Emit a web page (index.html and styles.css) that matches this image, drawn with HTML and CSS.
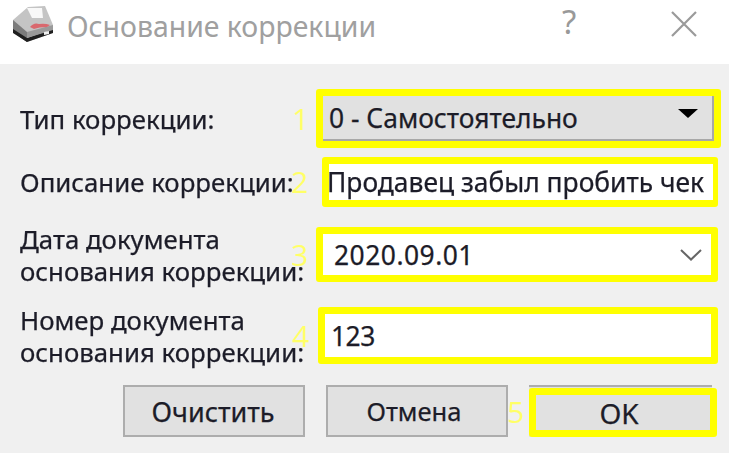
FILE: index.html
```html
<!DOCTYPE html>
<html lang="ru">
  <head>
    <meta charset="utf-8">
    <title>Основание коррекции</title>
    <link rel="stylesheet" href="styles.css">
  </head>
  <body>
    <div class="titlebar">
      <svg class="app-icon" width="44" height="44" viewBox="0 0 44 44">
        <path d="M17 3 L34 2 L42 21 L42 29 L16 38 L2 28 L2 16 Z" fill="#c4c4c4"/>
        <path d="M2 16 L16 28 L16 38 L2 28 Z" fill="#7c7c7c"/>
        <path d="M2 25 L16 34 L42 25 L42 29 L16 38 L2 29 Z" fill="#1f1f1f"/>
        <path d="M16 28 L42 21 L42 26 L16 34 Z" fill="#9a9a9a"/>
        <path d="M16 4 L31 4 L32 14 L21 14 Z" fill="#f8f8f8"/>
        <path d="M19 23 Q23 18 28 20 Q34 19 39 21 L36 23 Q28 23 23 25 Z" fill="#d9686e"/>
        <path d="M33 28 L38 27 L38 30 L33 31 Z" fill="#eee"/>
      </svg>
      <span class="window-title">Основание коррекции</span>
      <span class="help">?</span>
      <svg class="close" width="26" height="26" viewBox="0 0 26 26">
        <path d="M1 1 L25 25 M25 1 L1 25" stroke="#9a9a9a" stroke-width="2.2" fill="none"/>
      </svg>
    </div>

    <div class="dialog">
      <div class="row row-type">
        <div class="label">Тип коррекции:</div>
        <div class="field field-type">
          <span class="mark">1</span>
          <div class="combo">
            <span>0 - Самостоятельно</span>
            <span class="arrow"></span>
          </div>
        </div>
      </div>

      <div class="row row-desc">
        <div class="label">Описание коррекции:</div>
        <div class="field field-desc">
          <span class="mark">2</span>
          <div class="input">Продавец забыл пробить чек</div>
        </div>
      </div>

      <div class="row row-date">
        <div class="label">Дата документа<br>основания коррекции:</div>
        <div class="field field-date">
          <span class="mark">3</span>
          <div class="input">
            <span>2020.09.01</span>
            <svg class="chevron" width="22" height="12" viewBox="0 0 22 12">
              <path d="M1 1 L11 10.5 L21 1" stroke="#666" stroke-width="2" fill="none"/>
            </svg>
          </div>
        </div>
      </div>

      <div class="row row-num">
        <div class="label">Номер документа<br>основания коррекции:</div>
        <div class="field field-num">
          <span class="mark">4</span>
          <div class="input">123</div>
        </div>
      </div>

      <div class="buttons">
        <div class="btn btn-clear">Очистить</div>
        <div class="btn btn-cancel">Отмена</div>
        <div class="btn btn-ok">
          <span class="mark">5</span>
          <div class="ok-inner">OK</div>
        </div>
      </div>
    </div>
  </body>
</html>
```

FILE: styles.css
```css
*{
    margin: 0;
    padding: 0;
    box-sizing: border-box;
}
html,body{
    height: 100%;
    overflow: hidden;
}
body{
    background: #f0f0f0;
    color: #1c1c28;
    font-family: "Noto Sans", sans-serif;
    font-size: 26.4px;
    -webkit-text-stroke: 0.25px #1c1c28;
    display: flex;
    flex-direction: column;
    filter: blur(0.7px);
}
.titlebar{
    height: 64px;
    background: #fff;
    display: flex;
    align-items: center;
    position: relative;
    padding-left: 11px;
}
.app-icon{
    flex: none;
    margin-top: -12px;
}
.window-title{
    margin-left: 12px;
    font-size: 28.4px;
    color: #a0a0a0;
    -webkit-text-stroke: 0;
    margin-top: -12px;
}
.help{
    position: absolute;
    left: 562px;
    top: -1px;
    font-size: 33px;
    color: #999;
    -webkit-text-stroke: 0;
}
.close{
    position: absolute;
    left: 671px;
    top: 11px;
}
.dialog{
    flex: 1;
    padding-top: 25px;
}
.row{
    display: flex;
    align-items: center;
    padding-left: 20px;
    position: relative;
}
.label{
    font-size: 25.8px;
    line-height: 32px;
    white-space: nowrap;
}
.field{
    position: absolute;
    top: 0;
    bottom: 0;
    border: 7px solid #ff0;
    border-radius: 3px;
    display: flex;
}
.mark{
    position: absolute;
    top: 50%;
    transform: translateY(-50%);
    right: 100%;
    font-family: "Open Sans", sans-serif;
    font-size: 30px;
    line-height: 1;
    color: #ffff66;
    -webkit-text-stroke: 0;
}
.row-type{
    height: 59px;
}
.row-desc{
    height: 50px;
    margin-top: 9px;
}
.row-date{
    height: 55px;
    margin-top: 20px;
}
.row-num{
    height: 57px;
    margin-top: 25px;
}
.field-type{
    left: 316px;
    width: 405px;
}
.field-desc{
    left: 322px;
    width: 396px;
}
.field-date{
    left: 316px;
    width: 402px;
}
.field-num{
    left: 318px;
    width: 400px;
}
.field-type .mark{
    margin-right: 14px;
}
.field-desc .mark{
    margin-right: 21px;
}
.field-date .mark{
    margin-right: 15px;
}
.field-num .mark{
    margin-right: 16px;
}
.combo{
    flex: 1;
    background: #e1e1e1;
    border-right: 2px solid #a8a8a8;
    border-bottom: 2px solid #a8a8a8;
    display: flex;
    align-items: center;
    justify-content: space-between;
    padding: 0 14px 0 6px;
}
.arrow{
    width: 0;
    height: 0;
    border-left: 10px solid transparent;
    border-right: 10px solid transparent;
    border-top: 9px solid #000;
    margin-top: -8px;
}
.input{
    flex: 1;
    background: #fff;
    display: flex;
    align-items: center;
    justify-content: space-between;
    padding: 0 9px 0 6px;
    white-space: nowrap;
}
.field-date .input{
    padding-left: 11px;
    letter-spacing: 0.5px;
}
.field-desc .input{
    padding-left: 0;
    text-indent: -2px;
}
.field-num .input{
    letter-spacing: -0.5px;
}
.chevron{
    flex: none;
}
.buttons{
    display: flex;
    gap: 21px;
    height: 52px;
    margin-top: 21px;
    padding-left: 123px;
}
.btn{
    width: 182px;
    background: #e1e1e1;
    border: 2px solid #adadad;
    display: flex;
    align-items: center;
    justify-content: center;
    position: relative;
    font-size: 25.6px;
}
.btn-clear{
    font-size: 27px;
    padding-right: 2px;
}
.btn-cancel{
    padding-right: 6px;
}
.btn-ok{
    width: 183px;
    border-bottom: 0;
    border-left: 0;
    border-right: 0;
}
.ok-inner{
    position: absolute;
    left: 0;
    top: 1px;
    right: -5px;
    bottom: 0;
    background: #e1e1e1;
    border: 7px solid #ff0;
    border-radius: 3px;
    display: flex;
    align-items: center;
    justify-content: center;
    padding-right: 8px;
    font-size: 28px;
}
.btn-ok .mark{
    margin-right: 5px;
}
```
